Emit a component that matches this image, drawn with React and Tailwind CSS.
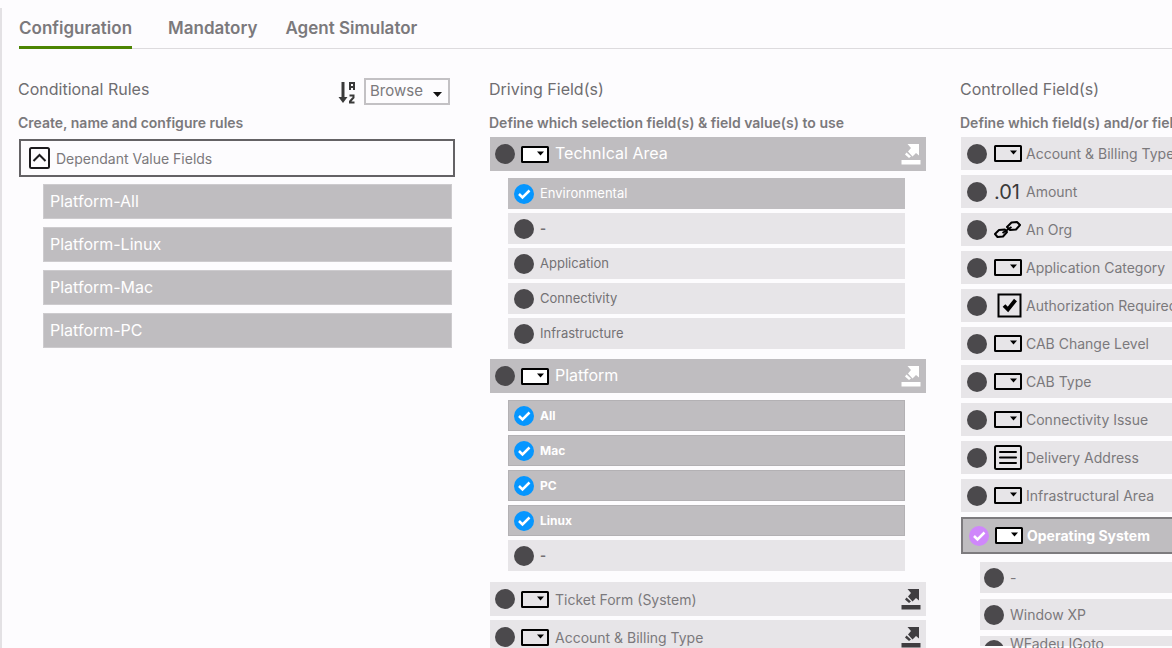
import React from 'react';
import clsx from 'clsx';

const tabs = ['Configuration', 'Mandatory', 'Agent Simulator'];

const rules = ['Platform-All', 'Platform-Linux', 'Platform-Mac', 'Platform-PC'];

const drivingFields = [
  {
    name: 'TechnIcal Area',
    active: true,
    values: [
      { name: 'Environmental', checked: true },
      { name: '-' },
      { name: 'Application' },
      { name: 'Connectivity' },
      { name: 'Infrastructure' }
    ]
  },
  {
    name: 'Platform',
    active: true,
    strong: true,
    values: [
      { name: 'All', checked: true },
      { name: 'Mac', checked: true },
      { name: 'PC', checked: true },
      { name: 'Linux', checked: true },
      { name: '-' }
    ]
  }
];

const otherDrivingFields = ['Ticket Form (System)', 'Account & Billing Type'];

const controlledFields = [
  { name: 'Account & Billing Type', type: 'dropdown' },
  { name: 'Amount', type: 'decimal' },
  { name: 'An Org', type: 'lookup' },
  { name: 'Application Category', type: 'dropdown' },
  { name: 'Authorization Required', type: 'checkbox' },
  { name: 'CAB Change Level', type: 'dropdown' },
  { name: 'CAB Type', type: 'dropdown' },
  { name: 'Connectivity Issue', type: 'dropdown' },
  { name: 'Delivery Address', type: 'text' },
  { name: 'Infrastructural Area', type: 'dropdown' }
];

const DropdownIcon = ({ filled }) => (
  <svg width="28" height="17" viewBox="0 0 28 17" className="shrink-0">
    <rect x="1" y="1" width="26" height="15" rx="0.5" fill={filled ? '#fff' : 'none'} stroke="#000" strokeWidth="2" />
    <path d="M16 5.5h7L19.5 9.5z" fill="#000" />
  </svg>
);

const LinkIcon = () => (
  <svg width="28" height="20" viewBox="0 0 28 20" fill="none" stroke="#000" strokeWidth="2" strokeLinejoin="round" className="shrink-0">
    <path d="M1 14l4-4 6-.5 2 2.500-4 4.500-5.500.5z" />
    <path d="M13 7l4.500-4.500 5.500-.5 3 3-4 4.500-6 .5z" />
    <path d="M8.500 13l9-6" />
  </svg>
);

const CheckboxIcon = () => (
  <svg width="28" height="25" viewBox="0 0 28 25" className="shrink-0">
    <rect x="4.5" y="1.5" width="22" height="22" fill="none" stroke="#000" strokeWidth="2" />
    <path d="M10 12.5l4 4 7.500-9.500" fill="none" stroke="#000" strokeWidth="3.8" />
  </svg>
);

const TextIcon = () => (
  <svg width="28" height="25" viewBox="0 0 28 25" fill="none" stroke="#000" strokeWidth="2" strokeLinecap="round" className="shrink-0">
    <rect x="1" y="1" width="26" height="23" rx="1.5" />
    <path d="M6 7h16M6 12.500h16M6 18h16" />
  </svg>
);

const OpenIcon = () => (
  <svg width="20" height="21" viewBox="0 0 20 21" fill="currentColor">
    <path d="M6.500 0H18v11.500l-3-2.500-3.500 3.500-4.500-5L10 4z" />
    <path d="M5.500 8.500l4.500 4-2 1.500-4-3.500z" />
    <path d="M.5 16h19v4.500H.5z" />
  </svg>
);

const SortIcon = () => (
  <svg width="18" height="24" viewBox="0 0 18 24" fill="none" stroke="#3a3a3a">
    <path d="M5 1v17" strokeWidth="3" />
    <path d="M.5 16h9L5 22z" fill="#3a3a3a" stroke="none" />
    <path d="M12 9V2h4v7M12 6h4" strokeWidth="2" />
    <path d="M11.500 14.500h4v2l-3.500 4v1h4.500" strokeWidth="2" />
  </svg>
);

const FieldIcon = ({ type, filled }) => {
  if (type === 'decimal') return <span className="w-7 shrink-0 text-xl text-[#3a3a3a]">.01</span>;
  if (type === 'lookup') return <LinkIcon />;
  if (type === 'checkbox') return <CheckboxIcon />;
  if (type === 'text') return <TextIcon />;
  return <DropdownIcon filled={filled} />;
};

const Toggle = ({ checked, purple }) => (
  <span className="grid size-5 shrink-0">
    <input
      type="checkbox"
      defaultChecked={checked}
      className={clsx(
        'peer col-start-1 row-start-1 size-5 appearance-none rounded-full bg-[#4b494c]',
        purple ? 'checked:bg-[#cf87fb]' : 'checked:bg-[#0596ff]'
      )}
    />
    <svg
      viewBox="0 0 20 20"
      fill="none"
      stroke="#fff"
      strokeWidth="2.5"
      className="pointer-events-none invisible col-start-1 row-start-1 size-5 peer-checked:visible"
    >
      <path d="M5 10l3.500 3.500L15.500 6.500" />
    </svg>
  </span>
);

const ValueRow = ({ name, checked, strong }) => (
  <label
    className={clsx(
      'flex h-[31px] items-center gap-1.5',
      checked ? 'bg-[#bfbdc0] text-white' : 'bg-[#e7e5e8] text-[#737174]',
      strong && checked ? 'border border-[#b3b1b4] pl-[5px] text-xs font-bold' : 'pl-1.5 text-[13px]',
      name === '-' && 'font-bold'
    )}
  >
    <Toggle checked={checked} />
    {name}
  </label>
);

const DrivingRow = ({ name, active }) => (
  <div
    className={clsx(
      'flex h-[34px] items-center px-[5px]',
      active ? 'bg-[#bfbdc0] text-white' : 'bg-[#e7e5e8] text-[#3f3d40]'
    )}
  >
    <label
      className={clsx(
        'flex flex-1 items-center gap-1.5',
        active ? 'text-base' : 'text-[14px] text-[#7b797c]'
      )}
    >
      <Toggle />
      <DropdownIcon filled={active} />
      <span className={clsx(active && 'pb-0.5')}>{name}</span>
    </label>
    <button aria-label={`Open ${name}`}>
      <OpenIcon />
    </button>
  </div>
);

const ColumnHeader = ({ title, description, children }) => (
  <header>
    <div className="flex h-[30px] items-end justify-between">
      <h2 className="self-start text-base leading-7 text-[#6f6d70]">{title}</h2>
      {children}
    </div>
    <p className="mt-2 text-[14px] leading-5 font-semibold whitespace-nowrap">{description}</p>
  </header>
);

const App = () => {
  return (
    <div className="h-screen overflow-hidden bg-[#fdfcfe] pt-2 font-['Inter',sans-serif] text-[#7b797c]">
      <div className="h-full border-l-2 border-[#e3e1e4]">
        <nav className="ml-[17px] flex h-[41px] border-b border-[#dddbde] text-[17px] leading-6 font-semibold">
          {tabs.map((tab, i) => (
            <button
              key={tab}
              className={clsx(
                'flex items-start pt-2',
                i === 0 ? 'mr-9 h-[41px] border-b-3 border-[#4c8503]' : 'mr-7'
              )}
            >
              {tab}
            </button>
          ))}
        </nav>

        <main className="grid grid-cols-[repeat(3,minmax(437px,1fr))] gap-x-[34px] pt-[26px] pl-4">
          <section>
            <ColumnHeader title="Conditional Rules" description="Create, name and configure rules">
              <div className="flex items-end gap-2 pr-[5px]">
                <button aria-label="Sort">
                  <SortIcon />
                </button>
                <div className="relative">
                  <select
                    aria-label="Browse"
                    className="block h-[27px] w-[86px] appearance-none border-2 border-[#c3c1c4] pb-0.5 pl-1 text-[15px] leading-5"
                  >
                    <option>Browse</option>
                  </select>
                  <svg width="9" height="5" viewBox="0 0 9 5" className="pointer-events-none absolute top-3.5 right-2">
                    <path d="M0 0h9L4.500 5z" fill="#111" />
                  </svg>
                </div>
              </div>
            </ColumnHeader>
            <div className="ml-px">
              <button className="mt-1.5 flex h-[38px] w-full items-center gap-1.5 border-2 border-[#646265] pl-2 text-[14px]">
                <svg width="21" height="22" viewBox="0 0 21 22" fill="none" stroke="#1c1a1d" strokeWidth="2">
                  <rect x="1" y="1" width="19" height="20" rx="1.5" />
                  <path d="M4.500 14l6-6 6 6" />
                </svg>
                Dependant Value Fields
              </button>
              <ul className="mt-[7px] mr-[3px] ml-6 space-y-2">
                {rules.map((rule) => (
                  <li key={rule}>
                    <button className="block h-[35px] w-full border border-[#cdcbce] bg-[#bfbdc0] pb-0.5 pl-1.5 text-left text-base text-white">
                      {rule}
                    </button>
                  </li>
                ))}
              </ul>
            </div>
          </section>

          <section>
            <ColumnHeader
              title="Driving Field(s)"
              description="Define which selection field(s) & field value(s) to use"
            />
            <div className="mt-1 ml-px">
              {drivingFields.map((field) => (
                <div key={field.name} className="mb-2.5">
                  <DrivingRow name={field.name} active={field.active} />
                  <div className="mt-[7px] mr-[21px] ml-[18px] space-y-1">
                    {field.values.map((value) => (
                      <ValueRow key={value.name} strong={field.strong} {...value} />
                    ))}
                  </div>
                </div>
              ))}
              <div className="space-y-1 pt-px">
                {otherDrivingFields.map((name) => (
                  <DrivingRow key={name} name={name} />
                ))}
              </div>
            </div>
          </section>

          <section>
            <ColumnHeader
              title="Controlled Field(s)"
              description="Define which field(s) and/or field value(s) to control"
            />
            <div className="mt-1 ml-px space-y-[5px]">
              {controlledFields.map((field) => (
                <label key={field.name} className="flex h-[33px] items-center gap-[7px] bg-[#e7e5e8] pl-1.5 text-[14px]">
                  <Toggle />
                  <span className="flex items-center gap-1">
                    <FieldIcon type={field.type} />
                    {field.name}
                  </span>
                </label>
              ))}
              <label className="flex h-[37px] items-center gap-1.5 border-2 border-[#7d7b7e] bg-[#bfbdc0] pl-1.5 text-[14px] font-bold text-white">
                <Toggle checked purple />
                <span className="flex items-center gap-1">
                  <FieldIcon type="dropdown" filled />
                  Operating System
                </span>
              </label>
            </div>
            <div className="mt-2 ml-5 space-y-1.5 text-[14px]">
              {['-', 'Window XP'].map((name) => (
                <label key={name} className="flex h-[31px] items-center gap-1.5 bg-[#e7e5e8] pl-1">
                  <Toggle />
                  {name}
                </label>
              ))}
              <label className="flex h-2.5 items-start gap-1.5 bg-[#e7e5e8] pl-1">
                <span className="h-2.5 overflow-hidden pt-1">
                  <Toggle />
                </span>
                <span className="leading-4">WFadeu IGoto</span>
              </label>
            </div>
          </section>
        </main>
      </div>
    </div>
  );
};

export default App;
